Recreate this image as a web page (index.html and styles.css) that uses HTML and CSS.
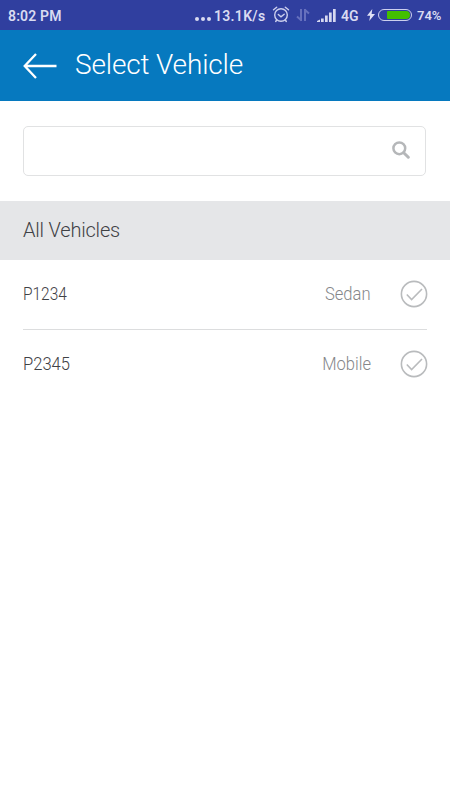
FILE: index.html
```html
<!DOCTYPE html>
<html lang="en">
<head>
  <meta charset="UTF-8" />
  <meta name="viewport" content="width=device-width, initial-scale=1.0" />
  <title>Select Vehicle</title>
  <link rel="stylesheet" href="styles.css">
</head>
<body>
  <div class="status-bar">
    <span class="time">8:02 PM</span>
    <span class="dots"><i></i><i></i><i></i></span>
    <span class="speed">13.1K/s</span>
    <svg class="alarm" width="18" height="18" viewBox="0 0 18 18" fill="none" stroke="#cdd0ee" stroke-width="1.4" stroke-linecap="round">
      <circle cx="9" cy="9" r="6.3" />
      <path d="M1.5 3.8 4.7 1.2M16.5 3.8 13.3 1.2M6.3 8.5l2.7 2.3 3.2-2.6M4.7 14l-1 1.5M13.3 14l1 1.5" />
    </svg>
    <svg class="data" width="14" height="14" viewBox="0 0 14 14" fill="none" stroke="#6670bd" stroke-width="2">
      <path d="M5 1v12M5.5 12.5 1 8.5M9 13V1M8.5 1.5 13 5.5" />
    </svg>
    <svg class="signal" width="19" height="13" viewBox="0 0 19 13" fill="#d6d8f0">
      <path d="M0 13v-1l3-1.500v2.500zM4 9.500h2.700V13H4zM8 6.500h2.700V13H8zM12 3.500h2.700V13H12zM16 0h2.700v13H16z" />
    </svg>
    <span class="network">4G</span>
    <svg class="bolt" width="8" height="12" viewBox="0 0 8 12" fill="#e0e2f5">
      <path d="M5.300 0 0 6.800h3.200L2.200 12 8 5H4.600z" />
    </svg>
    <span class="battery"><span class="level"></span></span>
    <span class="percent">74%</span>
  </div>

  <header class="header">
    <svg width="34" height="26" viewBox="0 0 34 26" fill="none" stroke="#fff" stroke-width="2.3">
      <path d="M13 1 1.700 13 13 25M1.700 13H33.500" />
    </svg>
    <h1>Select Vehicle</h1>
  </header>

  <div class="search">
    <div class="search-box">
      <input type="text" aria-label="Search">
      <svg width="18" height="18" viewBox="0 0 18 18" fill="none" stroke="#b5b7b9">
        <circle cx="7.300" cy="7.300" r="5.900" stroke-width="2.500" />
        <path d="M11.700 11.700l4.600 4.500" stroke-width="3" stroke-linecap="round" />
      </svg>
    </div>
  </div>

  <h2 class="section-title">All Vehicles</h2>

  <ul class="vehicles">
    <li class="vehicle">
      <span class="plate narrow">P1234</span>
      <span class="type">Sedan</span>
      <svg class="check" width="28" height="28" viewBox="0 0 28 28" fill="none" stroke="#b9bbbd" stroke-width="1.600">
        <circle cx="14" cy="14" r="12.600" />
        <path d="M6.800 14.500l4.800 5L22 9" />
      </svg>
    </li>
    <li class="vehicle">
      <span class="plate">P2345</span>
      <span class="type">Mobile</span>
      <svg class="check" width="28" height="28" viewBox="0 0 28 28" fill="none" stroke="#b9bbbd" stroke-width="1.600">
        <circle cx="14" cy="14" r="12.600" />
        <path d="M6.800 14.500l4.800 5L22 9" />
      </svg>
    </li>
  </ul>
</body>
</html>
```
FILE: styles.css
```css
* {
  box-sizing: border-box;
}

body {
  margin: 0;
  background: #fff;
  font-family: Roboto, "Liberation Sans", sans-serif;
  font-weight: 300;
}

.status-bar {
  display: flex;
  align-items: center;
  height: 30px;
  padding: 1px 8px 0;
  background: #303f9f;
  color: #d9dbf1;
  font-size: 14px;
  font-weight: 600;
  white-space: nowrap;
}

.status-bar svg {
  flex: none;
  margin-bottom: 1px;
}

.time {
  width: 187px;
  letter-spacing: 0.15px;
}

.dots {
  display: flex;
  gap: 2px;
  width: 19px;
  padding-top: 7px;
}

.dots i {
  width: 4px;
  height: 4px;
  border-radius: 50%;
  background: #d9dbf1;
}

.speed {
  width: 58px;
  letter-spacing: 0.3px;
}

.data {
  margin-left: 6px;
}

.signal {
  margin-left: 7px;
}

.network {
  width: 22px;
  margin-left: 5px;
}

.bolt {
  margin-left: 4px;
}

.battery {
  width: 34px;
  height: 12px;
  margin: 0 0 2px 3px;
  padding: 1px 1px 1px 8px;
  border: 1.5px solid #cdd0ee;
  border-radius: 6px;
}

.level {
  display: block;
  height: 100%;
  border-radius: 1px 4px 4px 1px;
  background: #43c000;
}

.percent {
  margin-left: 5px;
  font-size: 13px;
}

.header {
  display: flex;
  align-items: center;
  height: 71px;
  padding-left: 23px;
  background: #0679bf;
  color: #fff;
}

.header h1 {
  margin: 0 0 2px 18px;
  font-size: 28px;
  font-weight: 300;
  line-height: 34px;
  letter-spacing: -0.15px;
}

.search {
  height: 100px;
  padding: 25px 24px 25px 23px;
}

.search-box {
  display: flex;
  align-items: center;
  height: 50px;
  padding: 0 15px 2px 0;
  border: 1px solid #e1e2e3;
  border-radius: 5px;
}

.search-box input {
  flex: 1;
  height: 100%;
  border: 0;
  outline: 0;
  background: none;
}

.section-title {
  height: 59px;
  margin: 0;
  padding-left: 23px;
  background: #e5e6e8;
  color: #3f4145;
  font-size: 20px;
  font-weight: 300;
  line-height: 59px;
  letter-spacing: -0.2px;
}

.vehicles {
  margin: 0;
  padding: 0 23px;
  list-style: none;
}

.vehicle {
  display: flex;
  align-items: center;
  height: 70px;
  padding-bottom: 2px;
  border-bottom: 1px solid #dcddde;
  color: #3f4145;
  font-size: 18px;
}

.vehicle:last-child {
  border-bottom-color: transparent;
}

.plate {
  transform: scaleX(0.92);
  transform-origin: left;
}

.plate.narrow {
  transform: scaleX(0.86);
}

.type {
  margin: 0 -1px 1px auto;
  color: #85878a;
  transform: scaleX(0.92);
  transform-origin: right;
}

.plate {
  margin-bottom: 1px;
}

.check {
  margin: 0 -1px 0 30px;
}
```
